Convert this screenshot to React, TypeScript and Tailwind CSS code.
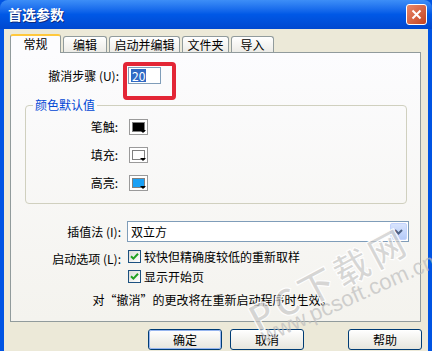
import React from 'react';

const font = "font-['Noto_Sans_CJK_SC',sans-serif]";

// small colour swatch button with a drop arrow
function Swatch({ color }: { color: string }) {
  return (
    <div className="relative w-[19px] h-[16px] border border-[#9a9a9a] bg-white p-[2px]">
      <div className="w-full h-full border border-[#808080]" style={{ background: color }} />
      <div className="absolute right-[1px] bottom-[1px] w-0 h-0 border-l-[3px] border-r-[3px] border-t-[3px] border-l-transparent border-r-transparent border-t-black" />
    </div>
  );
}

function Checkbox({ label }: { label: string }) {
  return (
    <div className="flex items-center h-[13px]">
      <div className="w-[13px] h-[13px] border border-[#1c5180] bg-gradient-to-br from-[#dcdcd7] to-white flex items-center justify-center">
        <svg width="9" height="9" viewBox="0 0 9 9">
          <path d="M1 4.2 L3.4 6.6 L8 1.8" stroke="#21a121" strokeWidth="2" fill="none" />
        </svg>
      </div>
      <span className="ml-[3px]">{label}</span>
    </div>
  );
}

function XpButton({ label, primary }: { label: string; primary?: boolean }) {
  return (
    <div className="w-[74px] h-[21px] rounded-[3px] border border-[#003c74] bg-gradient-to-b from-white to-[#e6e5dd] flex items-center justify-center">
      <div
        className={`w-full h-full rounded-[2px] flex items-center justify-center ${
          primary ? 'border border-[#96b5ef]' : ''
        }`}
      >
        {label}
      </div>
    </div>
  );
}

export default function App() {
  const tabs = [
    { label: '编辑', w: 'w-[44px]' },
    { label: '启动并编辑', w: 'w-[71px]' },
    { label: '文件夹', w: 'w-[47px]' },
    { label: '导入', w: 'w-[43px]' },
  ];

  return (
    <div className={`w-[432px] h-[351px] relative overflow-hidden bg-[#0054e3] text-[12px] text-black ${font}`}>
      {/* Title bar */}
      <div className="h-[29px] rounded-t-[8px] bg-gradient-to-b from-[#3d8ef7] via-[#0058e6] to-[#0048d0] flex items-center justify-between pl-[8px] pr-[5px]">
        <span className="text-white font-bold text-[14px] [text-shadow:1px_1px_0_#0a2a80]">首选参数</span>
        <div className="w-[21px] h-[21px] rounded-[3px] border border-white bg-gradient-to-br from-[#e8886a] to-[#c4411c] flex items-center justify-center">
          <svg width="11" height="11" viewBox="0 0 11 11">
            <path d="M1.5 1.5 L9.5 9.5 M9.5 1.5 L1.5 9.5" stroke="white" strokeWidth="2" />
          </svg>
        </div>
      </div>

      {/* Body */}
      <div className="h-[322px] mx-[4px] bg-[#ece9d8] px-[6px] pt-[5px] flex flex-col">
        {/* Tabs */}
        <div className="flex items-end h-[18px]">
          <div className="w-[51px] h-[19px] relative z-10 -mb-[1px] bg-[#fcfcfe] border-x border-[#919b9c] border-t-2 border-t-[#ffc83c] rounded-t-[3px] flex items-center justify-center pb-[2px]">
            常规
          </div>
          {tabs.map((t) => (
            <div
              key={t.label}
              className={`${t.w} h-[16px] ml-[2px] bg-gradient-to-b from-white to-[#ecebe6] border-x border-t border-[#919b9c] rounded-t-[3px] flex items-center justify-center`}
            >
              {t.label}
            </div>
          ))}
        </div>

        {/* Panel */}
        <div className="h-[270px] w-[411px] border border-[#919b9c] bg-gradient-to-b from-[#fcfcfe] to-[#f4f3ee] flex flex-col pt-[14px]">
          <div className="flex items-center h-[17px]">
            <span className="w-[108px] text-right">撤消步骤 (U):</span>
            <div className="ml-[9px] w-[33px] h-[17px] border border-[#7f9db9] bg-white flex items-center pl-[2px]">
              <span className="bg-[#316ac5] text-white leading-[13px] px-[1px]">20</span>
            </div>
          </div>

          <fieldset className="ml-[14px] mt-[12px] w-[382px] h-[108px] border border-[#d0d0bf] rounded-[4px] px-0 pt-[5px]">
            <legend className="ml-[7px] px-[2px] text-[#0046d5]">颜色默认值</legend>
            {[
              ['笔触:', '#000000'],
              ['填充:', '#ffffff'],
              ['高亮:', '#1aa0f5'],
            ].map(([label, c]) => (
              <div key={label} className="flex items-center h-[16px] mb-[12px]">
                <span className="w-[92px] text-right">{label}</span>
                <div className="ml-[11px]">
                  <Swatch color={c} />
                </div>
              </div>
            ))}
          </fieldset>

          <div className="flex items-center mt-[17px] h-[21px]">
            <span className="w-[110px] text-right">插值法 (I):</span>
            <div className="ml-[6px] w-[282px] h-[21px] border border-[#7f9db9] bg-white flex items-center justify-between pl-[3px] pr-[1px]">
              <span>双立方</span>
              <div className="w-[17px] h-[17px] rounded-[2px] bg-gradient-to-b from-[#d8e4fd] to-[#b5cbf9] border border-[#c3d3fd] flex items-center justify-center">
                <svg width="9" height="6" viewBox="0 0 9 6">
                  <path d="M1 1 L4.5 4.5 L8 1" stroke="#4d6185" strokeWidth="2" fill="none" />
                </svg>
              </div>
            </div>
          </div>

          <div className="flex mt-[8px]">
            <span className="w-[110px] text-right leading-[13px] mt-[2px]">启动选项 (L):</span>
            <div className="ml-[7px] flex flex-col gap-[7px]">
              <Checkbox label="较快但精确度较低的重新取样" />
              <Checkbox label="显示开始页" />
            </div>
          </div>

          <div className="mt-[8px] text-center pr-[6px]">对“撤消”的更改将在重新启动程序时生效。</div>
        </div>

        {/* Buttons */}
        <div className="flex mt-[7px] pl-[138px]">
          <XpButton label="确定" primary />
          <div className="ml-[8px]">
            <XpButton label="取消" />
          </div>
          <div className="ml-[44px]">
            <XpButton label="帮助" />
          </div>
        </div>
      </div>

      {/* Red annotation box */}
      <div className="absolute left-[123px] top-[62px] w-[53px] h-[38px] border-[4px] border-[#e32636] rounded-[4px]" />

      {/* Watermark */}
      <div className="absolute left-[250px] top-[292px] -rotate-[28deg] origin-left text-[36px] font-bold text-[#c8c8c8]/70 pointer-events-none whitespace-nowrap tracking-[4px] [-webkit-text-stroke:1px_white]">
        PC下载网
      </div>
      <div className="absolute left-[262px] top-[320px] -rotate-[24deg] origin-left text-[22px] text-[#bdbdbd]/70 pointer-events-none whitespace-nowrap font-['Liberation_Sans',sans-serif]">
        www.pcsoft.com.cn
      </div>
    </div>
  );
}
